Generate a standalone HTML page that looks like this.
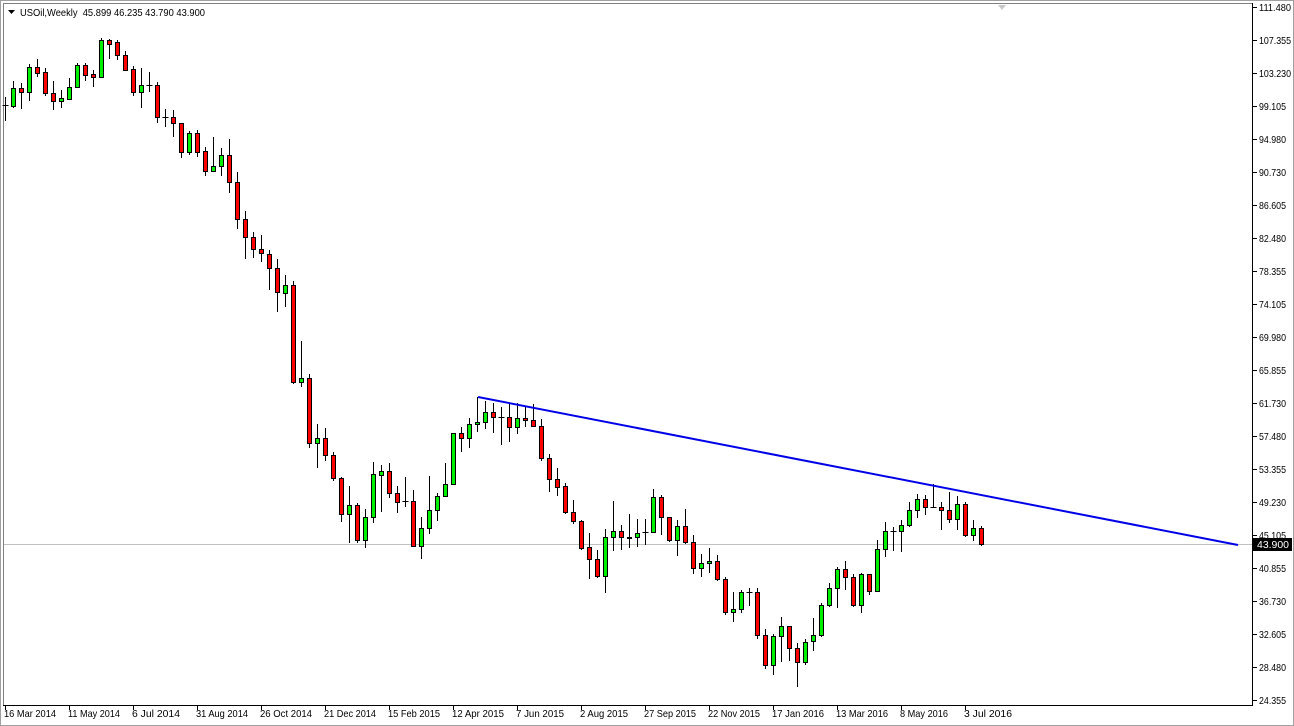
<!DOCTYPE html>
<html><head><meta charset="utf-8"><style>
html,body{margin:0;padding:0;background:#fff;}
svg{display:block;}
text{font-family:"Liberation Sans",sans-serif;font-size:10.5px;fill:#000;}
</style></head><body>
<svg id="c" width="1294" height="726" xmlns="http://www.w3.org/2000/svg">
<rect x="0" y="0" width="1294" height="726" fill="#fff"/>
<rect x="0.5" y="0.5" width="1293" height="725" fill="none" stroke="#a0a0a0"/>
<line x1="3.5" y1="3" x2="3.5" y2="706" stroke="#808080"/>
<line x1="3" y1="3.5" x2="1252" y2="3.5" stroke="#808080"/>
<line x1="1252.5" y1="3" x2="1252.5" y2="706" stroke="#000"/>
<line x1="3" y1="705.5" x2="1253" y2="705.5" stroke="#000"/>
<polygon points="998,5 1006,5 1002,10" fill="#c8c8c8"/>
<polygon points="8,10 15,10 11.5,14" fill="#000"/>
<text x="20" y="16" textLength="185" lengthAdjust="spacingAndGlyphs">USOil,Weekly&#160;&#160;45.899 46.235 43.790 43.900</text>
<line x1="4" y1="544.5" x2="1252" y2="544.5" stroke="#c0c0c0"/>
<g id="cand"></g>
<line x1="478" y1="397" x2="1238" y2="545" stroke="#0000e8" stroke-width="2"/>
<g id="ax"></g>
<rect x="1253" y="538" width="39" height="13" fill="#000"/>
<text x="1257" y="548" textLength="32" lengthAdjust="spacingAndGlyphs" style="fill:#fff">43.900</text>
</svg>
<script>
var d=[[105,105,97,121],[106,88,81,108],[88,92,83,109],[92,67,64,101],[67,73,59,77],[72,93,68,96],[93,101,81,110],[101,98,90,108],[99,87,78,99],[87,65,63,87],[65,75,63,81],[74,77,70,87],[77,40,38,77],[40,44,39,59],[42,55,40,60],[55,70,51,71],[69,92,66,96],[92,85,68,108],[85,85,72,92],[85,117,82,123],[117,117,109,127],[117,123,110,137],[123,152,123,158],[152,133,131,155],[133,152,130,157],[151,171,147,176],[171,166,137,171],[166,155,148,176],[155,182,139,193],[182,219,172,229],[219,237,211,259],[237,249,232,258],[249,253,235,262],[254,268,250,290],[268,292,259,312],[293,285,275,307],[285,382,281,384],[382,378,341,387],[378,443,374,448],[443,438,424,468],[438,455,428,461],[455,478,452,481],[478,514,477,522],[514,505,486,543],[505,540,503,543],[540,517,509,548],[517,474,462,523],[475,471,465,512],[471,493,463,498],[493,502,486,513],[501,501,477,507],[501,546,490,547],[546,528,517,559],[528,510,476,534],[510,496,493,521],[496,484,463,497],[484,433,433,484],[433,438,427,452],[438,424,418,448],[424,422,397,432],[422,412,401,429],[412,417,403,433],[417,417,407,445],[417,427,403,442],[427,418,403,434],[418,420,406,427],[420,426,404,427],[426,458,419,461],[458,479,454,492],[479,487,468,496],[486,512,483,514],[512,521,500,524],[521,548,520,550],[547,559,533,579],[559,576,550,578],[576,537,529,593],[537,531,501,551],[531,537,525,550],[537,538,514,548],[537,533,519,547],[532,532,519,545],[532,497,489,532],[497,517,495,535],[517,540,517,542],[540,526,520,556],[526,542,509,544],[542,568,535,574],[568,563,554,577],[563,561,548,573],[561,579,555,581],[579,612,577,615],[612,609,592,622],[609,592,590,613],[592,592,588,606],[592,635,588,639],[635,665,629,669],[665,636,634,675],[636,626,617,662],[626,648,626,661],[648,662,643,687],[662,642,639,665],[641,635,618,651],[635,605,603,637],[605,588,583,607],[588,569,567,608],[569,577,561,590],[577,605,574,607],[605,574,573,613],[574,591,574,595],[591,549,540,592],[549,531,522,557],[531,531,527,551],[531,525,520,552],[525,510,502,527],[510,499,494,518],[499,507,495,515],[507,507,484,507],[507,510,502,530],[510,519,492,523],[519,504,496,530],[504,535,502,537],[535,528,520,541],[528,544,526,546]];
var s='';
for(var i=0;i<d.length;i++){var o=d[i][0],c=d[i][1],h=d[i][2],l=d[i][3],cx=5.5+8*i;
s+='<line x1="'+cx+'" y1="'+h+'" x2="'+cx+'" y2="'+l+'" stroke="#000"/>';
if(o==c){s+='<line x1="'+(cx-3)+'" y1="'+(o+0.5)+'" x2="'+(cx+3)+'" y2="'+(o+0.5)+'" stroke="#000"/>';}
else{var t=Math.min(o,c),b=Math.max(o,c);s+='<rect x="'+(cx-2)+'" y="'+(t+0.5)+'" width="4" height="'+(b-t)+'" fill="'+(c<o?'#00ee00':'#ff0000')+'" stroke="#000"/>';}}
document.getElementById('cand').innerHTML=s;
var a='',p=['111.480','107.355','103.230','99.105','94.980','90.730','86.605','82.480','78.355','74.105','69.980','65.855','61.730','57.480','53.355','49.230','45.105','40.855','36.730','32.605','28.480','24.355'];
for(var k=0;k<p.length;k++){var y=7+33*k;var w=p[k].length==7?32:27;a+='<line x1="1253" y1="'+(y+0.5)+'" x2="1257" y2="'+(y+0.5)+'" stroke="#000"/><text x="1259" y="'+(y+4)+'" textLength="'+w+'" lengthAdjust="spacingAndGlyphs">'+p[k]+'</text>';}
var dl=['16 Mar 2014','11 May 2014','6 Jul 2014','31 Aug 2014','26 Oct 2014','21 Dec 2014','15 Feb 2015','12 Apr 2015','7 Jun 2015','2 Aug 2015','27 Sep 2015','22 Nov 2015','17 Jan 2016','13 Mar 2016','8 May 2016','3 Jul 2016'];
for(var k=0;k<dl.length;k++){var x=5+64*k;var w=Math.round(dl[k].length*4.75);a+='<line x1="'+(x+0.5)+'" y1="706" x2="'+(x+0.5)+'" y2="710" stroke="#000"/><text x="'+(x-1)+'" y="717" textLength="'+w+'" lengthAdjust="spacingAndGlyphs">'+dl[k]+'</text>';}
document.getElementById('ax').innerHTML=a;
</script>
</body></html>
